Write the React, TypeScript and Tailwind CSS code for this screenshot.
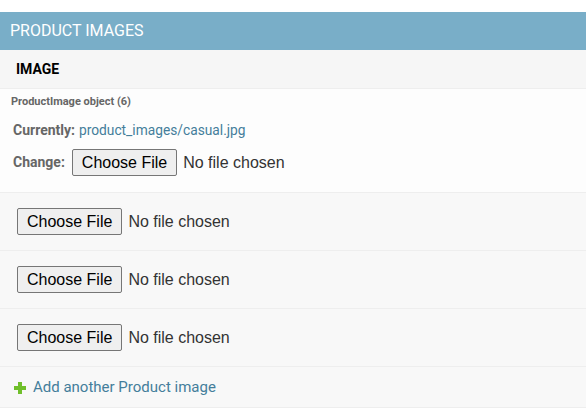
import React from "react";

function FileInput() {
  return (
    <div className="flex items-center font-['Liberation_Sans',Arial,sans-serif] text-[16px]">
      <button className="h-[27px] px-[9px] flex items-center border border-[#767676] rounded-[2px] bg-[#efefef] text-black leading-[19px]">
        Choose File
      </button>
      <span className="ml-[6px] text-[#333]">No file chosen</span>
    </div>
  );
}

export default function App() {
  return (
    <div className="w-[586px] h-[408px] bg-white pt-[12px] font-['Roboto',sans-serif] overflow-hidden">
      <div className="h-[38px] bg-[#79aec8] text-white text-[16px] px-[10px] flex items-center">
        PRODUCT IMAGES
      </div>
      <div className="h-[39px] bg-[#f6f6f6] border-b border-[#eee] flex items-center pl-[16px] font-bold text-[14px] text-black">
        IMAGE
      </div>
      <div className="h-[104px] bg-[#fdfdfd] border-b border-[#eee] flex flex-col pt-[6px]">
        <p className="pl-[11px] text-[11px] leading-[13px] font-bold text-[#666]">
          ProductImage object (6)
        </p>
        <p className="mt-[12px] pl-[13px] text-[14px] leading-[20px] text-[#666] flex items-baseline">
          <span className="font-bold">Currently:</span>
          <a className="ml-[4px] text-[13.75px] text-[#447e9b]">product_images/casual.jpg</a>
        </p>
        <div className="mt-[9px] pl-[13px] flex items-center">
          <span className="text-[14px] font-bold text-[#666] mr-[7px]">Change:</span>
          <FileInput />
        </div>
      </div>
      {[0, 1, 2].map((i) => (
        <div
          key={i}
          className="h-[58px] bg-[#f8f8f8] border-b border-[#eee] flex items-start pt-[15px] pl-[17px]"
        >
          <FileInput />
        </div>
      ))}
      <div className="h-[41px] bg-[#f8f8f8] border-b border-[#eee] flex items-center pl-[14px]">
        <svg width="12" height="12" viewBox="0 0 12 12" className="mr-[7px] mt-[1px]">
          <rect x="4" y="0" width="4" height="12" fill="#70bf2b" />
          <rect x="0" y="4" width="12" height="4" fill="#70bf2b" />
        </svg>
        <a className="text-[15px] text-[#447e9b]">Add another Product image</a>
      </div>
    </div>
  );
}
